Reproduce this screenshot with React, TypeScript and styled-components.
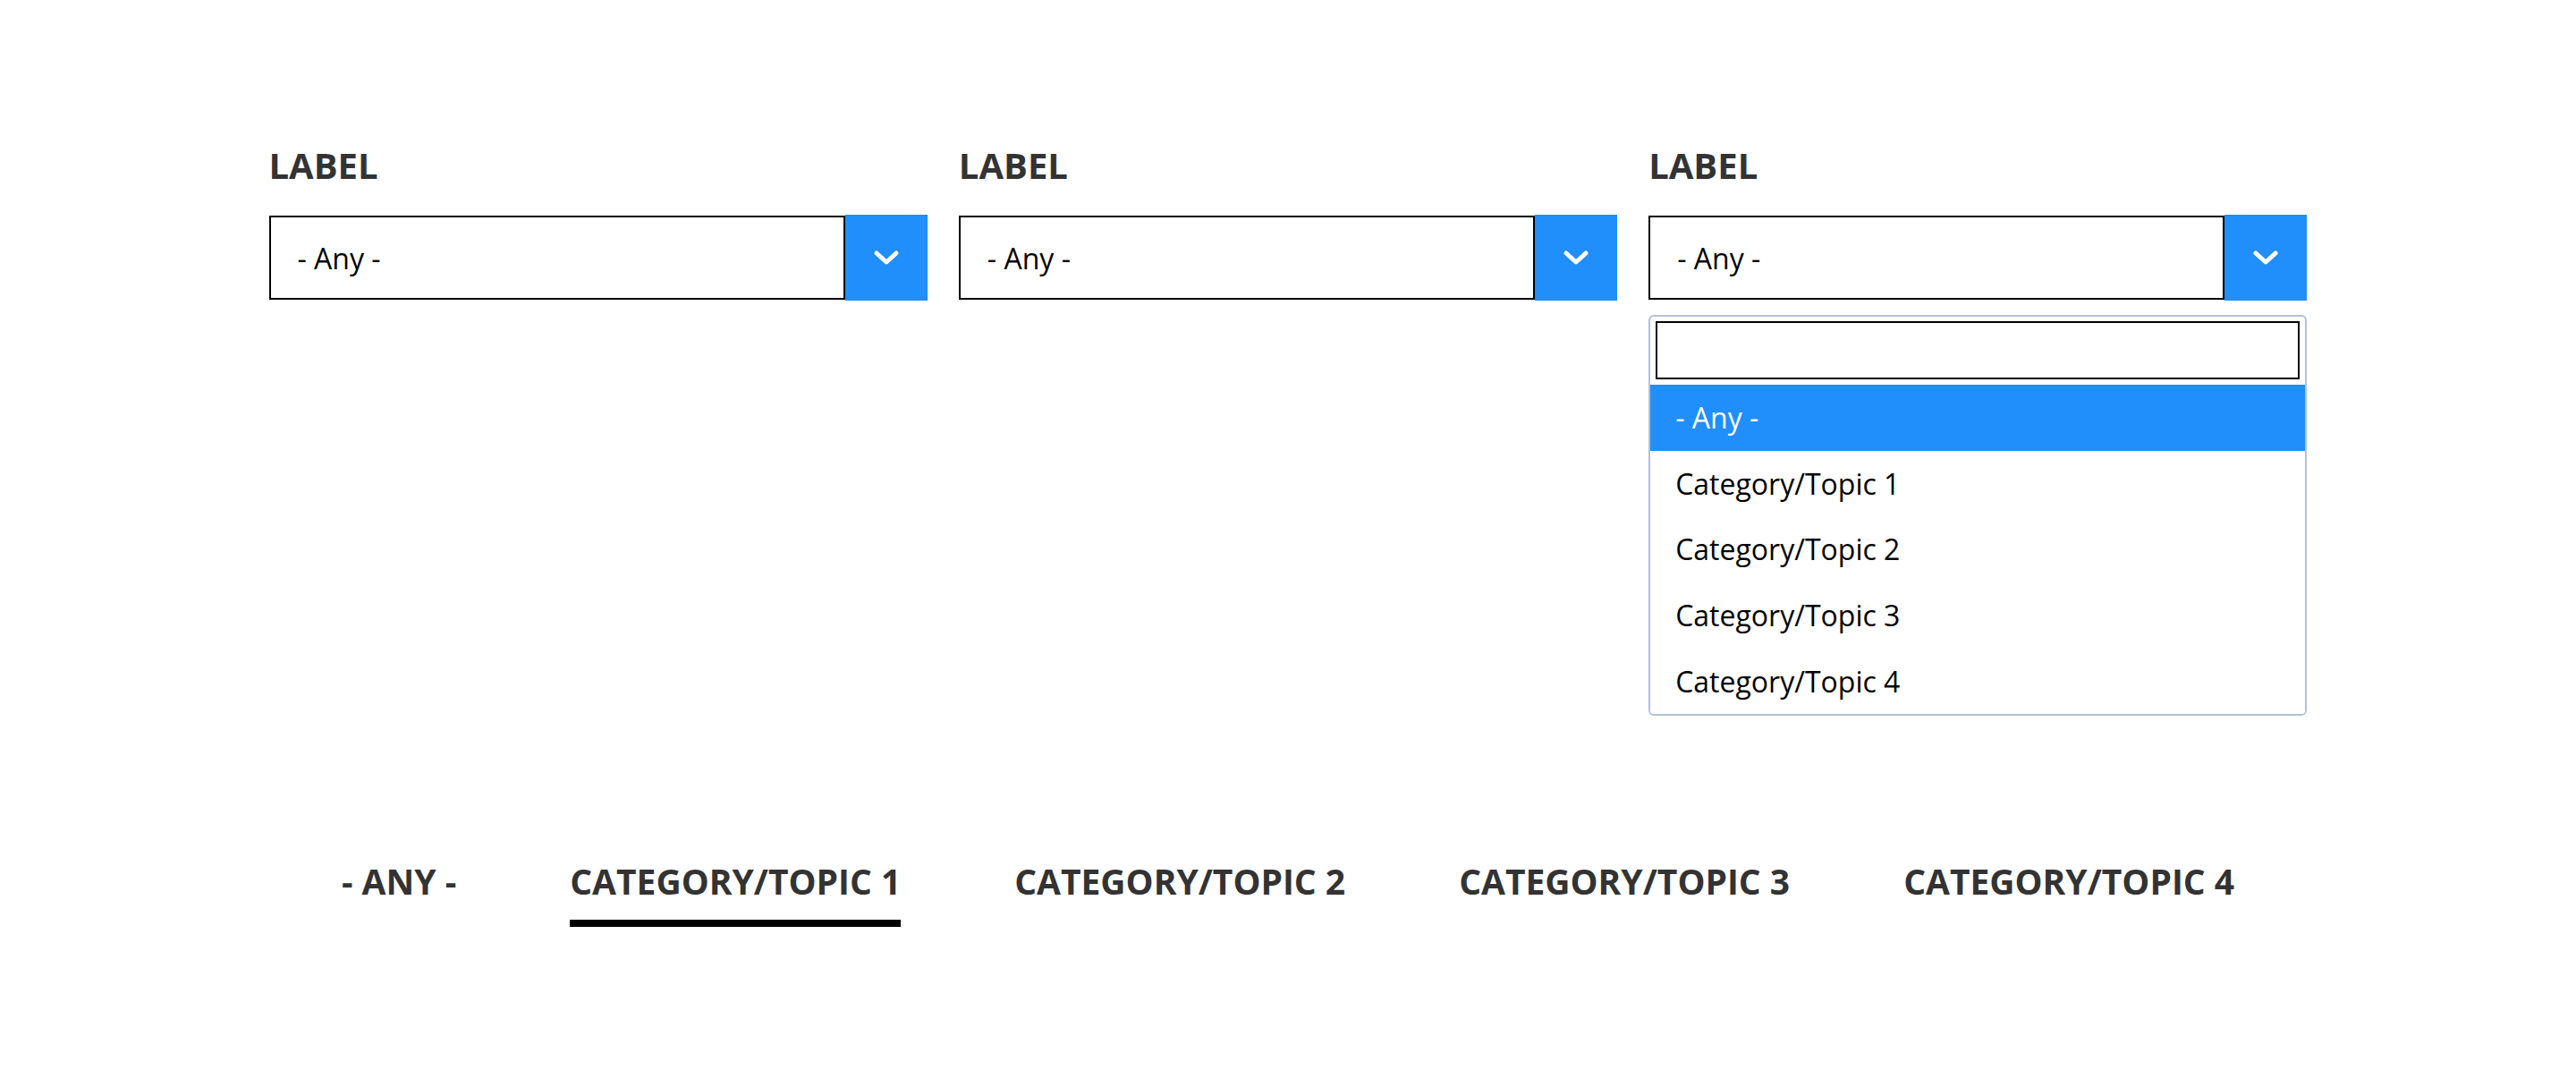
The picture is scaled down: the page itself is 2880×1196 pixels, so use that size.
import React from 'react';
import styled, {createGlobalStyle} from 'styled-components';

const GlobalStyle = createGlobalStyle`
  html, body {
    margin: 0;
    padding: 0;
    background: #fff;
    font-family: 'Open Sans', 'Noto Sans', sans-serif;
  }
`;

const Page = styled.div`
  width: 100%;
  min-height: 1196px;
  padding-top: 158px;
  box-sizing: border-box;
`;

const FilterGrid = styled.div`
  width: 2279px;
  margin: 0 auto;
  display: grid;
  grid-template-columns: repeat(3, 1fr);
  column-gap: 35px;
`;

const Field = styled.div`
  position: relative;
  display: flex;
  flex-direction: column;
`;

const Label = styled.label`
  font-size: 40px;
  line-height: 54px;
  font-weight: 700;
  color: #333;
  margin-bottom: 28px;
`;

const SelectBox = styled.div`
  display: flex;
  height: 96px;
`;

const SelectValue = styled.div`
  flex: 1;
  margin: 1px 0;
  border: 2px solid #000;
  display: flex;
  align-items: center;
  padding-left: 30px;
  font-size: 32px;
  color: #000;
  background: #fff;
`;

const SelectButton = styled.div`
  width: 92px;
  background: #208efb;
  display: flex;
  align-items: center;
  justify-content: center;
`;

const Dropdown = styled.div`
  position: absolute;
  top: 100%;
  left: 0;
  right: 0;
  margin-top: 16px;
  background: #fff;
  border: 2px solid #b3c1d6;
  border-radius: 6px;
  overflow: hidden;
`;

const SearchInput = styled.input`
  display: block;
  box-sizing: border-box;
  width: calc(100% - 12px);
  height: 65px;
  margin: 5px 6px 6px;
  border: 2px solid #000;
  outline: none;
  font-size: 32px;
  font-family: inherit;
`;

const Option = styled.div<{$active?: boolean}>`
  height: 73.6px;
  display: flex;
  align-items: center;
  padding: 0 28px;
  font-size: 32px;
  color: ${p => (p.$active ? '#fff' : '#000')};
  background: ${p => (p.$active ? '#208efb' : '#fff')};
`;

const Tabs = styled.nav`
  display: flex;
  justify-content: center;
  gap: 127px;
  margin-top: 622px;
`;

const Tab = styled.div<{$active?: boolean}>`
  font-size: 39px;
  line-height: 54px;
  font-weight: 700;
  color: #333;
  padding-bottom: 16px;
  border-bottom: 8px solid ${p => (p.$active ? '#000' : 'transparent')};
`;

const Chevron = () => (
  <svg width='30' height='18' viewBox='0 0 30 18'>
    <polyline points='4,4 15,14 26,4' fill='none' stroke='#fff' strokeWidth='5' strokeLinecap='round' strokeLinejoin='round' />
  </svg>
);

const options = ['- Any -', 'Category/Topic 1', 'Category/Topic 2', 'Category/Topic 3', 'Category/Topic 4'];

const Select = ({open}: {open?: boolean}) => (
  <Field>
    <Label>LABEL</Label>
    <SelectBox>
      <SelectValue>- Any -</SelectValue>
      <SelectButton><Chevron /></SelectButton>
    </SelectBox>
    {open && (
      <Dropdown>
        <SearchInput type='text' />
        {options.map((o, i) => (
          <Option key={o} $active={i === 0}>{o}</Option>
        ))}
      </Dropdown>
    )}
  </Field>
);

export default function App() {
  return (
    <Page>
      <GlobalStyle />
      <FilterGrid>
        <Select />
        <Select />
        <Select open />
      </FilterGrid>
      <Tabs>
        {options.map((o, i) => (
          <Tab key={o} $active={i === 1}>{o.toUpperCase()}</Tab>
        ))}
      </Tabs>
    </Page>
  );
}
